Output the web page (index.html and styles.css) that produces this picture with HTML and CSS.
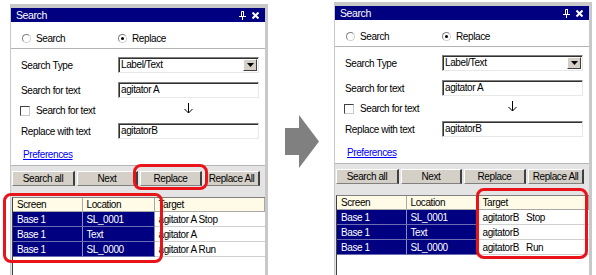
FILE: index.html
```html
<!DOCTYPE html>
<html lang="en">
<head>
  <meta charset="UTF-8" />
  <title>Search / Replace</title>
  <link rel="stylesheet" href="styles.css">
</head>
<body>

<div class="page">

  <div class="panel panel-left">
    <div class="titlebar">
      <span>Search</span>
      <span class="title-icons">
        <svg width="7" height="9" viewBox="0 0 7 9"><path d="M2.5 0.5h2v5h-2z" fill="none" stroke="#fff"/><path d="M4.5 0v6" stroke="#fff"/><path d="M0 5.5h7M3.5 6v3" stroke="#fff"/></svg>
        <svg width="7" height="7" viewBox="0 0 7 7"><path d="M0.5 0.5l6 6M6.5 0.5l-6 6" stroke="#fff" stroke-width="2"/></svg>
      </span>
    </div>

    <div class="mode-row">
      <span class="radio-item"><span class="radio"></span>Search</span>
      <span class="radio-item"><span class="radio checked"></span>Replace</span>
    </div>

    <div class="form">
      <div class="field field-gap">
        <span>Search Type</span>
        <div class="combo"><span>Label/Text</span><span class="combo-btn"><svg width="7" height="4" viewBox="0 0 7 4"><path d="M0 0h7L3.5 4z"/></svg></span></div>
      </div>
      <div class="field">
        <span>Search for text</span>
        <div class="textbox">agitator A</div>
      </div>
      <div class="field field-check">
        <span class="check-item"><span class="checkbox"></span>Search for text</span>
        <span class="down-arrow"><svg width="9" height="11" viewBox="0 0 9 11"><path d="M4.5 0v10M0.5 6l4 4 4-4" fill="none" stroke="#000"/></svg></span>
      </div>
      <div class="field">
        <span>Replace with text</span>
        <div class="textbox">agitatorB</div>
      </div>
      <a class="prefs" href="#">Preferences</a>
    </div>

    <div class="actions">
      <div class="buttons">
        <span class="btn btn-search">Search all</span>
        <span class="btn btn-next">Next</span>
        <span class="btn btn-replace">Replace</span>
        <span class="btn btn-all">Replace All</span>
      </div>
      <div class="results">
        <table>
          <colgroup><col class="c-screen"><col class="c-loc"><col></colgroup>
          <tr><th>Screen</th><th>Location</th><th>Target</th></tr>
          <tr><td class="sel">Base 1</td><td class="sel">SL_0001</td><td>agitator A Stop</td></tr>
          <tr><td class="sel">Base 1</td><td class="sel">Text</td><td>agitator A</td></tr>
          <tr><td class="sel">Base 1</td><td class="sel">SL_0000</td><td>agitator A Run</td></tr>
        </table>
      </div>
    </div>

    <div class="callout callout-button"></div>
    <div class="callout callout-rows"></div>
  </div>

  <div class="flow-arrow">
    <svg width="34" height="53" viewBox="0 0 34 53"><polygon points="0,13 14,13 14,0 34,26.5 14,53 14,40 0,40" fill="#808080"/></svg>
  </div>

  <div class="panel panel-right">
    <div class="titlebar">
      <span>Search</span>
      <span class="title-icons">
        <svg width="7" height="9" viewBox="0 0 7 9"><path d="M2.5 0.5h2v5h-2z" fill="none" stroke="#fff"/><path d="M4.5 0v6" stroke="#fff"/><path d="M0 5.5h7M3.5 6v3" stroke="#fff"/></svg>
        <svg width="7" height="7" viewBox="0 0 7 7"><path d="M0.5 0.5l6 6M6.5 0.5l-6 6" stroke="#fff" stroke-width="2"/></svg>
      </span>
    </div>

    <div class="mode-row">
      <span class="radio-item"><span class="radio"></span>Search</span>
      <span class="radio-item"><span class="radio checked"></span>Replace</span>
    </div>

    <div class="form">
      <div class="field field-gap">
        <span>Search Type</span>
        <div class="combo"><span>Label/Text</span><span class="combo-btn"><svg width="7" height="4" viewBox="0 0 7 4"><path d="M0 0h7L3.5 4z"/></svg></span></div>
      </div>
      <div class="field">
        <span>Search for text</span>
        <div class="textbox">agitator A</div>
      </div>
      <div class="field field-check">
        <span class="check-item"><span class="checkbox"></span>Search for text</span>
        <span class="down-arrow"><svg width="9" height="11" viewBox="0 0 9 11"><path d="M4.5 0v10M0.5 6l4 4 4-4" fill="none" stroke="#000"/></svg></span>
      </div>
      <div class="field">
        <span>Replace with text</span>
        <div class="textbox">agitatorB</div>
      </div>
      <a class="prefs" href="#">Preferences</a>
    </div>

    <div class="actions">
      <div class="buttons">
        <span class="btn btn-search">Search all</span>
        <span class="btn btn-next">Next</span>
        <span class="btn btn-replace">Replace</span>
        <span class="btn btn-all">Replace All</span>
      </div>
      <div class="results">
        <table>
          <colgroup><col class="c-screen"><col class="c-loc"><col></colgroup>
          <tr><th>Screen</th><th>Location</th><th>Target</th></tr>
          <tr><td class="sel">Base 1</td><td class="sel">SL_0001</td><td class="pre">agitatorB   Stop</td></tr>
          <tr><td class="sel">Base 1</td><td class="sel">Text</td><td class="pre">agitatorB</td></tr>
          <tr><td class="sel">Base 1</td><td class="sel">SL_0000</td><td class="pre">agitatorB   Run</td></tr>
        </table>
      </div>
    </div>

    <div class="callout callout-target"></div>
  </div>

</div>

</body>
</html>
```

FILE: styles.css
```css
body {
  margin: 0;
  background: #fff;
  font-family: "Liberation Sans", Arial, sans-serif;
  font-size: 10px;
  letter-spacing: -0.4px;
  color: #000;
  overflow: hidden;
}
.page {
  display: flex;
  align-items: flex-start;
  padding-left: 10px;
  height: 275px;
}
.panel {
  position: relative;
  width: 258px;
  height: 271px;
  box-sizing: border-box;
  background: #c8c8c8;
  padding: 4px 3px 0 1px;
  display: flex;
  flex-direction: column;
}
.panel-left {
  margin-top: 4px;
}
.panel-right {
  margin-top: 2px;
  height: 273px;
}
.titlebar {
  height: 14px;
  background: #000080;
  color: #fff;
  font-size: 10.5px;
  display: flex;
  align-items: center;
  justify-content: space-between;
  padding: 0 6px 0 5px;
}
.title-icons {
  display: flex;
  align-items: center;
  gap: 6px;
}
.title-icons svg {
  display: block;
}
.mode-row {
  display: grid;
  grid-template-columns: 96px 1fr;
  padding: 10px 0 3px 11px;
  line-height: 13px;
  background: #fff;
  border-bottom: 1px solid #b4b4b4;
}
.radio-item {
  display: flex;
  align-items: center;
  gap: 5px;
}
.radio {
  width: 9px;
  height: 9px;
  box-sizing: border-box;
  border-radius: 50%;
  border: 1px solid #808080;
  border-right-color: #d4d0c8;
  border-bottom-color: #d4d0c8;
  background: #fff;
  display: flex;
  align-items: center;
  justify-content: center;
}
.radio.checked::after {
  content: "";
  width: 3px;
  height: 3px;
  border-radius: 50%;
  background: #000;
}
.form {
  background: #fff;
  padding: 8px 5px 4px 10px;
  border-bottom: 1px solid #b4b4b4;
}
.field {
  display: grid;
  grid-template-columns: 97px 141px;
  align-items: center;
  height: 16px;
}
.field-gap {
  margin-bottom: 9px;
}
.field-check {
  height: 25px;
}
.check-item {
  display: flex;
  align-items: center;
  gap: 6px;
  margin-left: -1px;
  white-space: nowrap;
}
.checkbox {
  width: 10px;
  height: 10px;
  box-sizing: border-box;
  border: 1px solid #404040;
  border-right-color: #c8c8c8;
  border-bottom-color: #c8c8c8;
  background: #fff;
}
.down-arrow {
  align-self: start;
  margin-top: 5px;
  text-align: center;
}
.down-arrow svg {
  display: inline-block;
}
.combo,
.textbox {
  height: 16px;
  box-sizing: border-box;
  border: 1px solid #808080;
  border-right-color: #e8e8e8;
  border-bottom-color: #e8e8e8;
  box-shadow: inset 1px 1px #303030;
  background: #fff;
  padding-left: 2px;
  line-height: 14px;
  display: flex;
  align-items: center;
  justify-content: space-between;
}
.combo-btn {
  width: 14px;
  height: 12px;
  box-sizing: border-box;
  margin-right: 1px;
  background: #d4d0c8;
  border: 1px solid #fff;
  border-right-color: #404040;
  border-bottom-color: #404040;
  display: flex;
  align-items: center;
  justify-content: center;
}
.prefs {
  display: block;
  width: max-content;
  margin: 10px 0 0 2px;
  height: 12px;
  line-height: 12px;
  color: #0000ff;
  text-decoration: underline;
}
.actions {
  flex: 1;
  min-height: 0;
  background: #e4e4e4;
  padding: 5px 0 0 1px;
  display: flex;
  flex-direction: column;
}
.buttons {
  display: flex;
  gap: 2px;
  height: 15px;
}
.btn {
  box-sizing: border-box;
  background: #d4d0c8;
  border-top: 1px solid #fff;
  border-left: 1px solid #fff;
  border-right: 2px solid #404040;
  border-bottom: 1px solid #808080;
  text-align: center;
  line-height: 13px;
  white-space: nowrap;
}
.btn-search { width: 63px; }
.btn-next { width: 61px; }
.btn-replace { width: 62px; }
.btn-all { width: 56px; }
.results {
  flex: 1;
  margin-top: 11px;
  background: #fff;
  border-top: 1px solid #808080;
  border-left: 1px solid #404040;
}
table {
  border-collapse: collapse;
  width: 100%;
  table-layout: fixed;
}
.c-screen { width: 69px; }
.c-loc { width: 72px; }
th {
  height: 13px;
  background: #fffbe6;
  font-weight: normal;
  text-align: left;
  padding: 0 0 0 4px;
  border-right: 1px solid #a8a8a8;
  border-bottom: 1px solid #a8a8a8;
}
td {
  height: 14px;
  padding: 0 0 0 4px;
  border-bottom: 1px solid #d0d0d0;
  white-space: nowrap;
}
td.sel {
  background: #000080;
  color: #fff;
  border-right: 1px solid #8c8cc0;
  border-bottom-color: #6c6cb0;
}
td.pre {
  white-space: pre;
}
.flow-arrow {
  width: 66px;
  flex: none;
  padding-top: 115px;
}
.flow-arrow svg {
  display: block;
  margin-left: 17px;
}
.callout {
  position: absolute;
  box-sizing: border-box;
  border: 3px solid #e8141a;
  border-radius: 8px;
}
.callout-button {
  left: 123px;
  top: 160px;
  width: 75px;
  height: 26px;
}
.callout-rows {
  left: -7px;
  top: 189px;
  width: 160px;
  height: 70px;
}
.callout-target {
  left: 142px;
  top: 186px;
  width: 112px;
  height: 71px;
}
```
